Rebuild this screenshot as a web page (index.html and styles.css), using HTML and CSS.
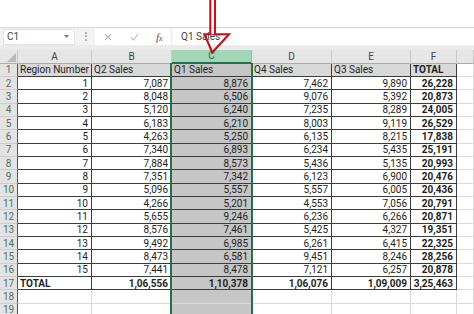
FILE: index.html
```html
<!DOCTYPE html>
<html>
<head>
<meta charset="utf-8">
<link rel="stylesheet" href="styles.css">
</head>
<body>
<div class="top"></div>
<div class="fbar">
  <div class="namebox"><span>C1</span><svg class="dd" width="5" height="3" viewBox="0 0 5 3"><path d="M0 0H5L2.5 3Z" fill="#7a7a7a"/></svg></div>
  <div class="dots"></div>
  <div class="icons">
    <svg class="ico" width="8" height="8" viewBox="0 0 8 8"><path d="M1 1L7 7M7 1L1 7" stroke="#b9b9b9" stroke-width="1.1" fill="none"/></svg>
    <svg class="ico chk" width="9" height="8" viewBox="0 0 9 8"><path d="M1 4.5L3.4 7L8 1" stroke="#b9b9b9" stroke-width="1.1" fill="none"/></svg>
    <span class="fx">f<span class="fxx">x</span></span>
  </div>
  <div class="input">Q1 Sales</div>
</div>
<div class="strip"></div>
<div class="sheetwrap">
<div class="sheet">
  <div class="corner"><svg width="9" height="9" viewBox="0 0 9 9"><path d="M9 0V9H0Z" fill="#b8b8b8"/></svg></div>
  <div class="ch">A</div><div class="ch">B</div><div class="ch sel">C</div><div class="ch">D</div><div class="ch">E</div><div class="ch">F</div><div class="ch"></div>

  <div class="rh">1</div><div class="c h">Region Number</div><div class="c h">Q2 Sales</div><div class="c h s">Q1 Sales</div><div class="c h">Q4 Sales</div><div class="c h">Q3 Sales</div><div class="c h b">TOTAL</div><div class="e"></div>
  <div class="rh">2</div><div class="c">1</div><div class="c">7,087</div><div class="c s">8,876</div><div class="c">7,462</div><div class="c">9,890</div><div class="c b">26,228</div><div class="e"></div>
  <div class="rh">3</div><div class="c">2</div><div class="c">8,048</div><div class="c s">6,506</div><div class="c">9,076</div><div class="c">5,392</div><div class="c b">20,873</div><div class="e"></div>
  <div class="rh">4</div><div class="c">3</div><div class="c">5,120</div><div class="c s">6,240</div><div class="c">7,235</div><div class="c">8,289</div><div class="c b">24,005</div><div class="e"></div>
  <div class="rh">5</div><div class="c">4</div><div class="c">6,183</div><div class="c s">6,210</div><div class="c">8,003</div><div class="c">9,119</div><div class="c b">26,529</div><div class="e"></div>
  <div class="rh">6</div><div class="c">5</div><div class="c">4,263</div><div class="c s">5,250</div><div class="c">6,135</div><div class="c">8,215</div><div class="c b">17,838</div><div class="e"></div>
  <div class="rh">7</div><div class="c">6</div><div class="c">7,340</div><div class="c s">6,893</div><div class="c">6,234</div><div class="c">5,435</div><div class="c b">25,191</div><div class="e"></div>
  <div class="rh">8</div><div class="c">7</div><div class="c">7,884</div><div class="c s">8,573</div><div class="c">5,436</div><div class="c">5,135</div><div class="c b">20,993</div><div class="e"></div>
  <div class="rh">9</div><div class="c">8</div><div class="c">7,351</div><div class="c s">7,342</div><div class="c">6,123</div><div class="c">6,900</div><div class="c b">20,476</div><div class="e"></div>
  <div class="rh">10</div><div class="c">9</div><div class="c">5,096</div><div class="c s">5,557</div><div class="c">5,557</div><div class="c">6,005</div><div class="c b">20,436</div><div class="e"></div>
  <div class="rh">11</div><div class="c">10</div><div class="c">4,266</div><div class="c s">5,201</div><div class="c">4,553</div><div class="c">7,056</div><div class="c b">20,791</div><div class="e"></div>
  <div class="rh">12</div><div class="c">11</div><div class="c">5,655</div><div class="c s">9,246</div><div class="c">6,236</div><div class="c">6,266</div><div class="c b">20,871</div><div class="e"></div>
  <div class="rh">13</div><div class="c">12</div><div class="c">8,576</div><div class="c s">7,461</div><div class="c">5,425</div><div class="c">4,327</div><div class="c b">19,351</div><div class="e"></div>
  <div class="rh">14</div><div class="c">13</div><div class="c">9,492</div><div class="c s">6,985</div><div class="c">6,261</div><div class="c">6,415</div><div class="c b">22,325</div><div class="e"></div>
  <div class="rh">15</div><div class="c">14</div><div class="c">8,473</div><div class="c s">6,581</div><div class="c">9,451</div><div class="c">8,246</div><div class="c b">28,256</div><div class="e"></div>
  <div class="rh">16</div><div class="c">15</div><div class="c">7,441</div><div class="c s">8,478</div><div class="c">7,121</div><div class="c">6,257</div><div class="c b">20,878</div><div class="e"></div>
  <div class="rh">17</div><div class="c b l">TOTAL</div><div class="c b">1,06,556</div><div class="c b s">1,10,378</div><div class="c b">1,06,076</div><div class="c b">1,09,009</div><div class="c b">3,25,463</div><div class="e"></div>
  <div class="rh">18</div><div class="e"></div><div class="e"></div><div class="e s"></div><div class="e"></div><div class="e"></div><div class="e"></div><div class="e"></div>
  <div class="rh">19</div><div class="e"></div><div class="e"></div><div class="e s"></div><div class="e"></div><div class="e"></div><div class="e"></div><div class="e"></div>
</div>
<div class="selcol"></div>
</div>
<svg class="arrow" width="474" height="60" viewBox="0 0 474 60">
  <path d="M210.3 -3V34.3H204.5L212.3 52.5L229 34.3H215V-3" fill="none" stroke="#c0141c" stroke-width="2.1" stroke-linejoin="miter"/>
</svg>
</body>
</html>
```
FILE: styles.css
```css
html, body {
  margin: 0;
  padding: 0;
}
body {
  width: 474px;
  height: 314px;
  overflow: hidden;
  position: relative;
  background: #fff;
  font-family: Roboto, "Liberation Sans", sans-serif;
  font-size: 10px;
  color: #222;
}
.top {
  height: 27px;
  background: #fff;
}
.fbar {
  height: 18px;
  box-sizing: border-box;
  border-top: 1px solid #d9d9d9;
  background: #f3f3f3;
  display: flex;
  align-items: center;
}
.namebox {
  margin-left: 3px;
  width: 72px;
  height: 16px;
  box-sizing: border-box;
  background: #fff;
  border: 1px solid #e2e2e2;
  display: flex;
  align-items: center;
  justify-content: space-between;
  padding: 0 5px 0 3px;
  color: #444;
}
.dots {
  margin-left: 10px;
  width: 0;
  height: 9px;
  border-left: 2px dotted #b3b3b3;
}
.icons {
  margin-left: 8px;
  width: 75px;
  height: 16px;
  box-sizing: border-box;
  background: #fff;
  display: flex;
  align-items: center;
  padding-left: 9px;
}
.chk {
  margin-left: 18px;
}
.fx {
  margin-left: 17px;
  font-family: "Liberation Serif", serif;
  font-style: italic;
  font-size: 11px;
  color: #555;
}
.fxx {
  font-size: 8px;
}
.input {
  margin-left: 3px;
  flex: 1;
  height: 16px;
  box-sizing: border-box;
  background: #fff;
  display: flex;
  align-items: center;
  padding-left: 8px;
  color: #444;
}
.strip {
  height: 5px;
  background: #ebebeb;
}
.sheetwrap {
  position: relative;
}
.sheet {
  display: grid;
  grid-template-columns: 18px 74px 80px 80px 80px 79px 46px 1fr;
  grid-template-rows: 13.5px repeat(19, 13.35px);
}
.sheet > div {
  box-sizing: border-box;
  overflow: hidden;
  white-space: nowrap;
  display: flex;
  align-items: center;
}
.corner {
  background: #e6e6e6;
  border-right: 1px solid #c8c8c8;
  border-bottom: 1px solid #ababab;
  justify-content: flex-end;
  align-items: flex-end !important;
  padding: 0 1px 1px 0;
}
.ch {
  background: #e6e6e6;
  border-right: 1px solid #c8c8c8;
  border-bottom: 1px solid #ababab;
  justify-content: center;
  color: #444;
}
.ch.sel {
  background: #a3d6b6;
  color: #1f6a40;
  border-right-color: #8cc3a3;
  border-bottom: 2px solid #217346;
}
.rh {
  background: #e3e3e3;
  border-right: 1px solid #217346;
  border-bottom: 1px solid #cdcdcd;
  justify-content: center;
  color: #55705f;
}
.c {
  background: #fff;
  border-right: 1px solid #3c3c3c;
  border-bottom: 1px solid #3c3c3c;
  justify-content: flex-end;
  padding: 0 3px 0 2px;
  color: #1e1e1e;
}
.c.h {
  background: #d9d9d9;
  justify-content: flex-start;
}
.c.l {
  justify-content: flex-start;
}
.c.s,
.e.s {
  background: #c6c6c6;
}
.b {
  font-weight: 700;
}
.e {
  background: #fff;
  border-right: 1px solid #dadada;
  border-bottom: 1px solid #dadada;
}
.selcol {
  position: absolute;
  left: 170px;
  top: 13px;
  bottom: 0;
  width: 83px;
  box-sizing: border-box;
  border-left: 2px solid #217346;
  border-right: 2px solid #217346;
  pointer-events: none;
}
.arrow {
  position: absolute;
  left: 0;
  top: 0;
  pointer-events: none;
}
```
